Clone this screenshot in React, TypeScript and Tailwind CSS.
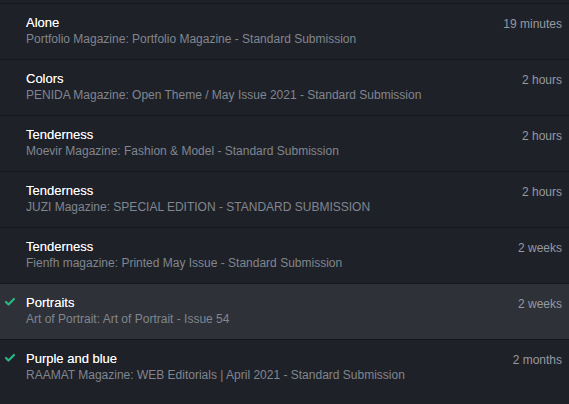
import { Check } from "lucide-react"

type Item = {
  title: string
  sub: string
  time: string
  done?: boolean
  active?: boolean
}

const items: Item[] = [
  { title: "Alone", sub: "Portfolio Magazine: Portfolio Magazine - Standard Submission", time: "19 minutes" },
  { title: "Colors", sub: "PENIDA Magazine: Open Theme / May Issue 2021 - Standard Submission", time: "2 hours" },
  { title: "Tenderness", sub: "Moevir Magazine: Fashion & Model - Standard Submission", time: "2 hours" },
  { title: "Tenderness", sub: "JUZI Magazine: SPECIAL EDITION - STANDARD SUBMISSION", time: "2 hours" },
  { title: "Tenderness", sub: "Fienfh magazine: Printed May Issue - Standard Submission", time: "2 weeks" },
  { title: "Portraits", sub: "Art of Portrait: Art of Portrait - Issue 54", time: "2 weeks", done: true, active: true },
  { title: "Purple and blue", sub: "RAAMAT Magazine: WEB Editorials | April 2021 - Standard Submission", time: "2 months", done: true },
]

export default function App() {
  return (
    <div className="h-[404px] w-[569px] overflow-hidden bg-[#1f2128] font-['Liberation_Sans',Arial,sans-serif]">
      <div className="h-[4px] border-b border-[#16171b]" />
      {items.map((it, i) => (
        <div
          key={i}
          className={
            "flex h-[56px] border-b border-[#16171b] pr-[7px] last:border-b-0 " +
            (it.active ? "bg-[#2e3137]" : "")
          }
        >
          <div className="flex w-[26px] shrink-0 justify-center pt-[12px] pr-[7px]">
            {it.done && <Check className="h-[12px] w-[12px] text-[#2bb585]" strokeWidth={4.5} />}
          </div>
          <div className="flex-1 pt-[11px]">
            <div className="text-[13px] leading-[16px] text-white [text-shadow:0_0_0.3px_rgba(255,255,255,0.6)]">{it.title}</div>
            <div className="text-[12px] leading-[16px] text-[#80868f]">{it.sub}</div>
          </div>
          <div className="pt-[12px] text-[12px] leading-[16px] text-[#959aa2]">{it.time}</div>
        </div>
      ))}
    </div>
  )
}
